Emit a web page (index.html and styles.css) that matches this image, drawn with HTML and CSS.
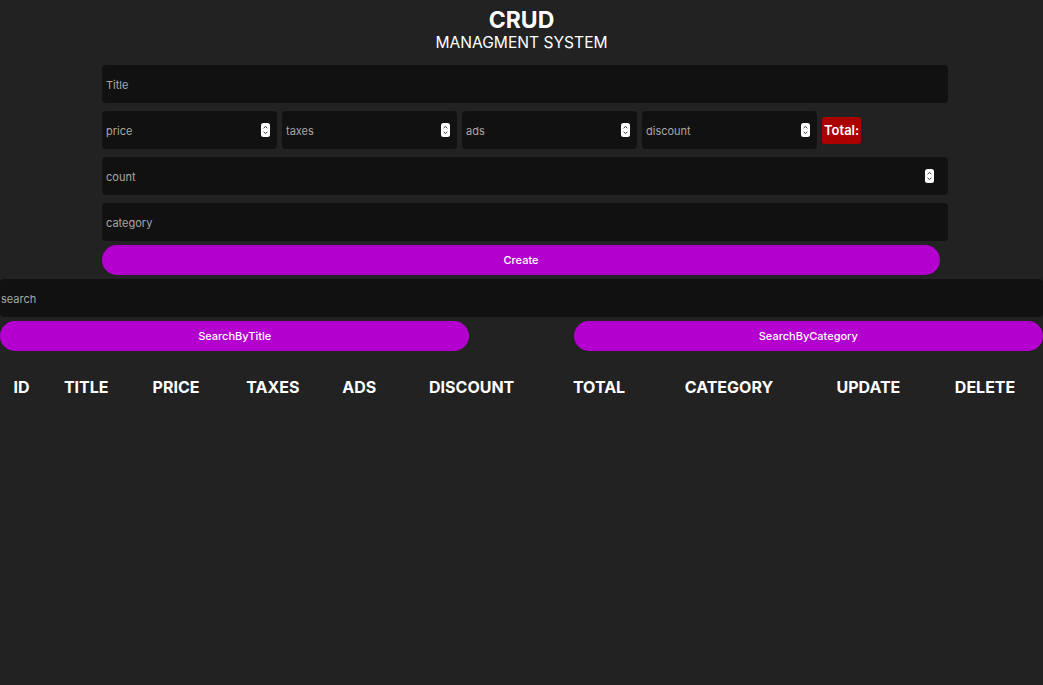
FILE: index.html
```html
<!DOCTYPE html>
<html lang="en">
<head>
<meta charset="utf-8">
<title>CRUD</title>
<link rel="stylesheet" href="styles.css">
</head>
<body>
<div class="crud">
  <header class="head">
    <h1 class="head-title">CRUD</h1>
    <p class="head-sub">MANAGMENT SYSTEM</p>
  </header>
  <div class="inputs">
    <input class="field" type="text" placeholder="Title">
    <div class="price-row">
      <div class="num-wrap small">
        <input class="field" type="text" placeholder="price">
        <svg class="spin" viewBox="0 0 9 14" width="9" height="14"><rect x="0" y="0" width="9" height="14" rx="2.5" fill="#fff"/><path d="M2.6 5.2 L4.5 3.4 L6.4 5.2 M2.6 8.8 L4.5 10.6 L6.4 8.8" fill="none" stroke="#333" stroke-width="1"/></svg>
      </div>
      <div class="num-wrap small">
        <input class="field" type="text" placeholder="taxes">
        <svg class="spin" viewBox="0 0 9 14" width="9" height="14"><rect x="0" y="0" width="9" height="14" rx="2.5" fill="#fff"/><path d="M2.6 5.2 L4.5 3.4 L6.4 5.2 M2.6 8.8 L4.5 10.6 L6.4 8.8" fill="none" stroke="#333" stroke-width="1"/></svg>
      </div>
      <div class="num-wrap small">
        <input class="field" type="text" placeholder="ads">
        <svg class="spin" viewBox="0 0 9 14" width="9" height="14"><rect x="0" y="0" width="9" height="14" rx="2.5" fill="#fff"/><path d="M2.6 5.2 L4.5 3.4 L6.4 5.2 M2.6 8.8 L4.5 10.6 L6.4 8.8" fill="none" stroke="#333" stroke-width="1"/></svg>
      </div>
      <div class="num-wrap small">
        <input class="field" type="text" placeholder="discount">
        <svg class="spin" viewBox="0 0 9 14" width="9" height="14"><rect x="0" y="0" width="9" height="14" rx="2.5" fill="#fff"/><path d="M2.6 5.2 L4.5 3.4 L6.4 5.2 M2.6 8.8 L4.5 10.6 L6.4 8.8" fill="none" stroke="#333" stroke-width="1"/></svg>
      </div>
      <small class="total">Total:</small>
    </div>
    <div class="num-wrap wide">
      <input class="field" type="text" placeholder="count">
      <svg class="spin" viewBox="0 0 9 14" width="9" height="14"><rect x="0" y="0" width="9" height="14" rx="2.5" fill="#fff"/><path d="M2.6 5.2 L4.5 3.4 L6.4 5.2 M2.6 8.8 L4.5 10.6 L6.4 8.8" fill="none" stroke="#333" stroke-width="1"/></svg>
    </div>
    <input class="field" type="text" placeholder="category">
    <button class="btn create">Create</button>
  </div>
</div>
<div class="outputs">
  <input class="field search" type="text" placeholder="search">
  <div class="search-btns">
    <button class="btn half">SearchByTitle</button>
    <button class="btn half">SearchByCategory</button>
  </div>
  <table class="grid">
    <thead>
      <tr>
        <th>ID</th><th>TITLE</th><th>PRICE</th><th>TAXES</th><th>ADS</th><th>DISCOUNT</th><th>TOTAL</th><th>CATEGORY</th><th>UPDATE</th><th>DELETE</th>
      </tr>
    </thead>
    <tbody></tbody>
  </table>
</div>
</body>
</html>
```
FILE: styles.css
```css
* { box-sizing: border-box; }
html, body {
  margin: 0;
  padding: 0;
  background: #222222;
  color: #fff;
  font-family: Inter, "Noto Sans", "Liberation Sans", sans-serif;
  height: 100%;
}
.crud {
  width: 839px;
  margin: 0 auto;
}
.head {
  text-align: center;
  padding-top: 8px;
}
.head-title {
  margin: 0;
  font-size: 23px;
  font-weight: 700;
  line-height: 24px;
}
.head-sub {
  margin: 0;
  font-size: 15.6px;
  font-weight: 400;
  line-height: 22px;
}
.inputs {
  display: flex;
  flex-direction: column;
  gap: 8px;
  margin-top: 11px;
}
.field {
  display: block;
  width: 846px;
  height: 38px;
  background: #111111;
  border: none;
  border-radius: 4px;
  outline: none;
  color: #ddd;
  padding: 1px 4px 0;
  font-family: inherit;
  font-size: 11px;
}
.field::placeholder { color: #a8a8a8; }
.price-row {
  display: flex;
  align-items: center;
  gap: 5px;
}
.num-wrap {
  position: relative;
}
.num-wrap.small .field { width: 175px; }
.spin {
  position: absolute;
  top: 12px;
  right: 7px;
}
.total {
  display: block;
  background: #aa0000;
  color: #fff;
  font-size: 13px;
  font-weight: 600;
  border-radius: 3px;
  height: 27px;
  line-height: 27px;
  padding: 0 2px;
}
.btn {
  display: block;
  border: none;
  background: #b300cf;
  color: #fff;
  height: 30px;
  border-radius: 15px;
  font-family: inherit;
  font-size: 11px;
  font-weight: 500;
  cursor: pointer;
}
.create {
  width: 838px;
  margin-top: -4px;
}
.outputs {
  margin-top: 4px;
}
.search {
  width: 100%;
  padding: 1px 1px 0;
}
.search-btns {
  display: flex;
  justify-content: space-between;
  margin-top: 4px;
}
.half { width: 45%; }
.grid {
  width: 100%;
  border-spacing: 2px;
  margin-top: 22px;
}
.grid th {
  font-size: 16px;
  font-weight: 700;
  padding: 0 4px;
  height: 24px;
  text-align: center;
}
```
